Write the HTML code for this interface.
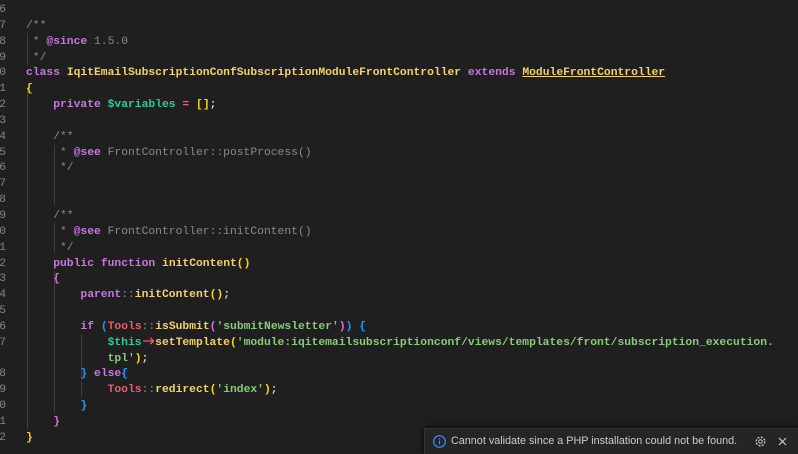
<!DOCTYPE html>
<html><head><meta charset="utf-8"><style>
body{margin:0;width:798px;height:453px;background:#1f1f1f;overflow:hidden;position:relative;font-family:"Liberation Mono",monospace;}
.code{position:absolute;left:26px;top:3px;font-size:11.33px;line-height:15.85px;font-weight:bold;white-space:pre;color:#d4d4d4;}
.ln{position:absolute;left:-6px;top:3px;font-size:11.33px;line-height:15.85px;color:#858585;white-space:pre;text-align:right;width:12px;font-family:"Liberation Mono",monospace;}
.c{color:#8a8a8a;font-weight:normal}
.k{color:#c678dd}
.y{color:#f2d36b}
.v{color:#2fc9a0}
.r{color:#ef596f}
.s{color:#89ca78}
.b1{color:#ffd700}.b2{color:#da70d6}.b3{color:#179fff}
.u{text-decoration:underline}
.ar{display:inline-block;width:13.6px;height:10px;vertical-align:-1px}
.guide{position:absolute;width:1px;background:#404040}
.note{position:absolute;left:424px;top:428px;width:374px;height:25px;background:#252526;border-top:1px solid #333;border-left:1px solid #333;box-shadow:0 0 6px #000;font-family:"Liberation Sans",sans-serif;font-size:10.8px;color:#cccccc;}
</style></head><body>
<div class="guide" style="left:27px;top:33px;height:32px"></div>
<div class="guide" style="left:27px;top:89px;height:340px"></div>
<div class="guide" style="left:54px;top:145px;height:60px"></div>
<div class="guide" style="left:54px;top:223px;height:30px"></div>
<div class="guide" style="left:54px;top:271px;height:142px"></div>
<div class="guide" style="left:81px;top:334px;height:46px"></div>
<div class="guide" style="left:81px;top:382px;height:15px"></div>
<div class="ln">6
7
8
9
0
1
2
3
4
5
6
7
8
9
0
1
2
3
4
5
6
7

8
9
0
1
2</div>
<div class="code">
<span class="c">/**</span>
<span class="c"> * <span class="k" style="font-weight:bold">@since</span> 1.5.0</span>
<span class="c"> */</span>
<span class="k">class</span> <span class="y">IqitEmailSubscriptionConfSubscriptionModuleFrontController</span> <span class="k">extends</span> <span class="y u">ModuleFrontController</span>
<span class="b1">{</span>
    <span class="k">private</span> <span class="v">$variables</span> <span class="r">=</span> <span class="b1">[]</span>;

    <span class="c">/**</span>
<span class="c">     * <span class="k" style="font-weight:bold">@see</span> FrontController::postProcess()</span>
<span class="c">     */</span>


    <span class="c">/**</span>
<span class="c">     * <span class="k" style="font-weight:bold">@see</span> FrontController::initContent()</span>
<span class="c">     */</span>
    <span class="k">public</span> <span class="k">function</span> <span class="y">initContent</span><span class="b1">()</span>
    <span class="b2">{</span>
        <span class="k">parent</span><span class="c">::</span><span class="y">initContent</span><span class="b1">()</span>;

        <span class="k">if</span> <span class="b3">(</span><span class="r">Tools</span><span class="c">::</span><span class="y">isSubmit</span><span class="b2">(</span><span class="s">'submitNewsletter'</span><span class="b2">)</span><span class="b3">)</span> <span class="b3">{</span>
            <span class="v">$this</span><svg class="ar" viewBox="0 0 14 10"><path d="M1 5H12M8.5 1.8L12 5L8.5 8.2" fill="none" stroke="#ef596f" stroke-width="1.4"/></svg><span class="y">setTemplate</span><span class="b1">(</span><span class="s">'module:iqitemailsubscriptionconf/views/templates/front/subscription_execution.</span>
<span class="s">            tpl'</span><span class="b1">)</span>;
        <span class="b3">}</span> <span class="k">else</span><span class="b3">{</span>
            <span class="r">Tools</span><span class="c">::</span><span class="y">redirect</span><span class="b1">(</span><span class="s">'index'</span><span class="b1">)</span>;
        <span class="b3">}</span>
    <span class="b2">}</span>
<span class="b1">}</span></div>
<div class="note">
<svg style="position:absolute;left:8px;top:6px" width="13" height="13" viewBox="0 0 13 13"><circle cx="6.5" cy="6.5" r="5.8" fill="none" stroke="#3794ff" stroke-width="1.2"/><rect x="5.9" y="5.5" width="1.2" height="4" fill="#3794ff"/><rect x="5.9" y="3.3" width="1.2" height="1.2" fill="#3794ff"/></svg>
<span style="position:absolute;left:26px;top:6px">Cannot validate since a PHP installation could not be found.</span>
<svg style="position:absolute;left:329px;top:6px" width="13" height="13" viewBox="0 0 13 13"><circle cx="6.5" cy="6.5" r="4.3" fill="none" stroke="#ccc" stroke-width="1.3" stroke-dasharray="2 1.4"/><circle cx="6.5" cy="6.5" r="1.8" fill="none" stroke="#ccc" stroke-width="1"/></svg>
<svg style="position:absolute;left:353px;top:8px" width="9" height="9" viewBox="0 0 9 9"><path d="M1 1L8 8M8 1L1 8" stroke="#ccc" stroke-width="1.2"/></svg>
</div>
</body></html>
